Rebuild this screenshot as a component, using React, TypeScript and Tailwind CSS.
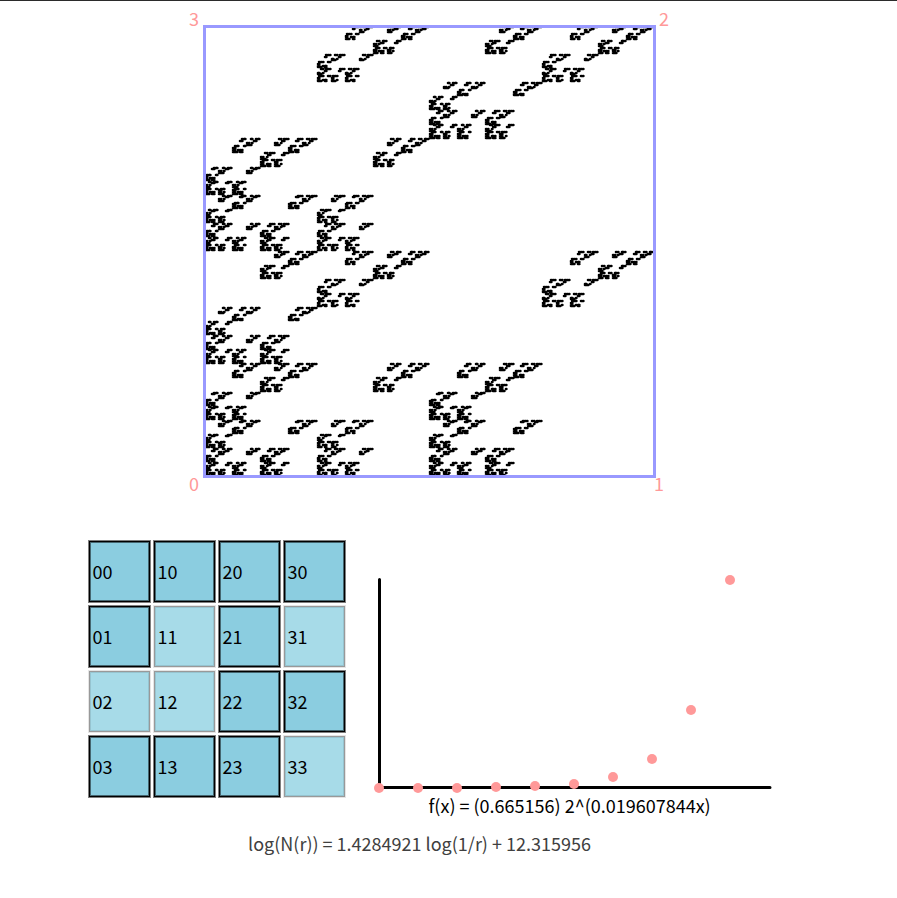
const SIZE = 450;
const DEPTH = 8;
const CELLS = 2 ** DEPTH;
const FORBIDDEN = ["11", "31", "02", "12", "33"];
const DIGITS = [0, 1, 2, 3];

/** Walks every admissible address and collects one dot per cell. */
function buildAttractor(): string {
  const parts: string[] = [];
  const walk = (col: number, row: number, depth: number, last: number) => {
    if (depth === DEPTH) {
      const x = Math.round((col * SIZE) / CELLS);
      const y = Math.round(SIZE - ((row + 0.5) * SIZE) / CELLS);
      parts.push(`M${x} ${y}h0.4`);
      return;
    }
    for (const d of DIGITS) {
      if (last >= 0 && FORBIDDEN.includes(`${d}${last}`)) continue;
      const dx = d === 1 || d === 2 ? 1 : 0;
      const dy = d >= 2 ? 1 : 0;
      walk(col * 2 + dx, row * 2 + dy, depth + 1, d);
    }
  };
  walk(0, 0, 0, -1);
  return parts.join("");
}

const attractor = buildAttractor();

const samples = [788, 788, 788, 787, 786, 784, 777, 759, 710, 580];

function Attractor() {
  return (
    <svg viewBox="0 0 490 500" className="h-[500px] w-[490px]" role="img" aria-label="Attractor">
      <path d={attractor} transform="translate(21 21)" stroke="#000" strokeWidth="2.6" strokeLinecap="round" />
      <rect x="20.5" y="21.5" width="450" height="450" fill="none" stroke="#9999ff" strokeWidth="3" />
      <g fill="#ff9999" fontSize="18">
        <text x="5" y="21">3</text>
        <text x="475" y="21">2</text>
        <text x="5" y="486">0</text>
        <text x="470" y="486">1</text>
      </g>
    </svg>
  );
}

function TransitionGrid() {
  return (
    <div className="grid grid-cols-4 gap-1">
      {DIGITS.map((row) =>
        DIGITS.map((col) => {
          const name = `${col}${row}`;
          const allowed = !FORBIDDEN.includes(name);
          return (
            <button
              key={name}
              type="button"
              aria-pressed={allowed}
              className={
                allowed
                  ? "size-[61px] border border-black bg-[#8bcde0] pb-[2px] pl-[3px] text-left shadow-[0_0_0_1px_rgba(0,0,0,0.5),inset_0_0_0_1px_rgba(0,0,0,0.5)]"
                  : "size-[61px] border border-[#999999] bg-[#a7dbe8] pb-[2px] pl-[3px] text-left shadow-[0_0_0_1px_rgba(0,0,0,0.1),inset_0_0_0_1px_rgba(0,0,0,0.1)]"
              }
            >
              {name}
            </button>
          );
        }),
      )}
    </div>
  );
}

function GrowthChart() {
  return (
    <figure className="w-[400px]">
      <svg viewBox="0 0 400 223" className="block h-[223px] w-[400px]" role="img" aria-label="Growth of f(x)">
        <path d="M6.5 9.5V217.5H397" fill="none" stroke="#000" strokeWidth="3" strokeLinecap="round" />
        <g fill="#ff9999">
          {samples.map((y, i) => (
            <circle key={i} cx={6 + i * 39} cy={y - 570} r="5" />
          ))}
        </g>
      </svg>
      <figcaption className="pl-14 text-black">f(x) = (0.665156) 2^(0.019607844x)</figcaption>
    </figure>
  );
}

export default function App() {
  return (
    <main className="min-h-screen border-t border-[#2b2b2b] bg-white font-['Noto_Sans_CJK_SC','Noto_Sans',sans-serif] text-[18px] leading-6 text-black">
      <div className="flex justify-center pr-[39px] pt-1">
        <Attractor />
      </div>
      <div className="flex items-start justify-center gap-7 pr-9 pt-9">
        <TransitionGrid />
        <div className="pt-[29px]">
          <GrowthChart />
        </div>
      </div>
      <p className="pr-[58px] pt-[14px] text-center text-[#404040]">log(N(r)) = 1.4284921 log(1/r) + 12.315956</p>
    </main>
  );
}
